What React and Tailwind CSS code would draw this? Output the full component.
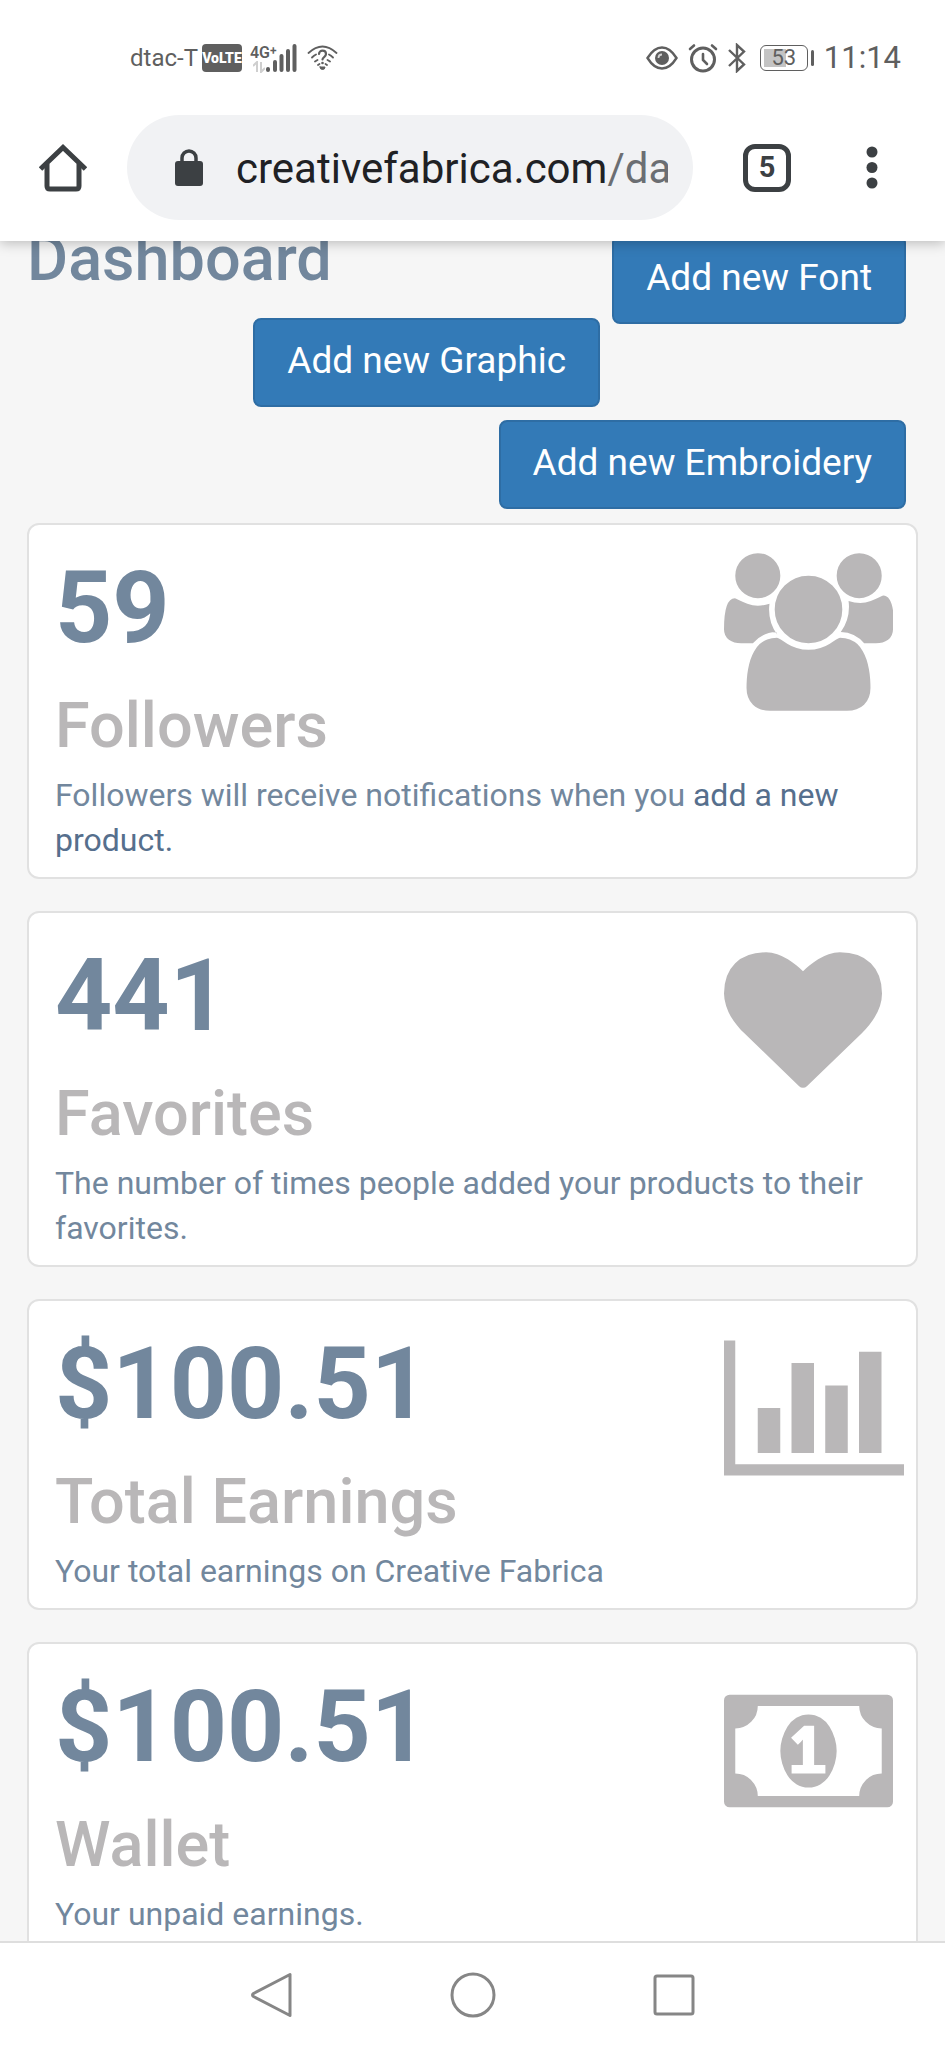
const STATS = [
  {
    value: '59',
    label: 'Followers',
    text: 'Followers will receive notifications when you ',
    link: 'add a new product.',
    icon: UsersIcon,
  },
  {
    value: '441',
    label: 'Favorites',
    text: 'The number of times people added your products to their favorites.',
    icon: HeartIcon,
  },
  {
    value: '$100.51',
    label: 'Total Earnings',
    text: 'Your total earnings on Creative Fabrica',
    icon: BarChartIcon,
  },
  {
    value: '$100.51',
    label: 'Wallet',
    text: 'Your unpaid earnings.',
    icon: MoneyIcon,
  },
]

function UsersIcon() {
  return (
    <svg className="h-[158px] w-[169px]" viewBox="0 0 1920 1792" fill="currentColor" aria-hidden>
      <path d="M593 896q-162 5-265 128h-134q-82 0-138-40.5t-56-118.5q0-353 124-353 6 0 43.5 21t97.5 42.5 119 21.5q67 0 133-23-5 37-5 66 0 159 93 287zm1071 637q0 120-73 189.5t-194 69.5h-874q-121 0-194-69.5t-73-189.5q0-53 3.5-103.5t14-109 26.5-108.5 43-97.5 62-81 85.5-53.5 111.5-20q10 0 43 21.5t73 48 107 48 135 21.5 135-21.5 107-48 73-48 43-21.5q61 0 111.5 20t85.5 53.5 62 81 43 97.5 26.5 108.5 14 109 3.5 103.5zm-1024-1277q0 106-75 181t-181 75-181-75-75-181 75-181 181-75 181 75 75 181zm704 384q0 159-112.5 271.5t-271.5 112.5-271.5-112.5-112.5-271.5 112.5-271.5 271.5-112.5 271.5 112.5 112.5 271.5zm576 225q0 78-56 118.5t-138 40.5h-134q-103-123-265-128 93-128 93-287 0-29-5-66 66 23 133 23 59 0 119-21.5t97.5-42.5 43.5-21q124 0 124 353zm-128-609q0 106-75 181t-181 75-181-75-75-181 75-181 181-75 181 75 75 181z" />
    </svg>
  )
}

function HeartIcon() {
  return (
    <svg className="h-[158px] w-[158px]" viewBox="0 0 1792 1792" fill="currentColor" aria-hidden>
      <path d="M896 1664q-26 0-44-18l-624-602q-10-8-27.5-26t-55.5-65.5-68-97.5-53.5-121-23.5-138q0-220 127-344t351-124q62 0 126.5 21.5t120 58 95.5 68.5 76 68q36-36 76-68t95.5-68.5 120-58 126.5-21.5q224 0 351 124t127 344q0 221-229 450l-623 600q-18 18-44 18z" />
    </svg>
  )
}

function BarChartIcon() {
  return (
    <svg className="h-[158px] w-[180px]" viewBox="0 0 2048 1792" fill="currentColor" aria-hidden>
      <path d="M640 896v512h-256v-512h256zm384-512v1024h-256v-1024h256zm1024 1152v128h-2048v-1536h128v1408h1920zm-640-896v768h-256v-768h256zm384-384v1152h-256v-1152h256z" />
    </svg>
  )
}

function MoneyIcon() {
  return (
    <svg className="h-[158px] w-[169px]" viewBox="0 0 1920 1792" fill="currentColor" aria-hidden>
      <path d="M768 1152h384v-96h-128v-448h-114l-148 137 77 80q42-37 55-57h2v288h-128v96zm512-256q0 70-21 142t-59.5 134-101.5 101-138 39-138-39-101.5-101-59.5-134-21-142 21-142 59.5-134 101.5-101 138-39 138 39 101.5 101 59.5 134 21 142zm512 256v-512q-106 0-181-75t-75-181h-1152q0 106-75 181t-181 75v512q106 0 181 75t75 181h1152q0-106 75-181t181-75zm128-832v1152q0 26-19 45t-45 19h-1792q-26 0-45-19t-19-45v-1152q0-26 19-45t45-19h1792q26 0 45 19t19 45z" />
    </svg>
  )
}

function StatusBar() {
  return (
    <div className="flex h-[115px] items-center justify-between pr-11 pl-[130px] text-[#5f5f5f]">
      <div className="flex items-center">
        <span className="text-2xl leading-7">dtac-T</span>
        <span className="ml-1 flex h-7 w-10 items-center justify-center rounded bg-[#5f5f5f] text-sm font-black text-white">
          VoLTE
        </span>
        <div className="ml-2 flex items-end">
          <div className="flex flex-col items-end">
            <span className="flex items-start text-base leading-4 font-semibold">
              4G<span className="text-xs leading-3">+</span>
            </span>
            {/* Data transfer arrows */}
            <svg className="mr-3 h-3 w-3" viewBox="0 0 12 12" fill="none" stroke="#cfcfcf" strokeWidth="2" aria-hidden>
              <path d="M0 5l4-4v10M8 1v10l4-4" />
            </svg>
          </div>
          <svg className="-ml-3 h-[30px] w-8" viewBox="0 0 32 30" stroke="currentColor" strokeWidth="4" strokeLinecap="round" aria-hidden>
            <path d="M3 27v-1M10 27v-8M16.500 27v-14M23 27V8M29.500 27V3" />
          </svg>
        </div>
        <svg className="ml-2.5 h-7 w-[31px]" viewBox="0 0 31 28" fill="none" stroke="currentColor" strokeWidth="1.800" strokeLinecap="round" aria-hidden>
          <path d="M1.500 9Q15.500-4 29.500 9M5 13.500q2-2 4-3M26 13.500q-2-2-4-3M8 17.500l2.500-1.500M23 17.500l-2.500-1.500M11 21l1.500-1M20 21l-1.500-1" />
          <path d="M12 10c0-4.500 7-4.500 7 0 0 3-3.500 3-3.500 5.500" strokeWidth="2.200" />
          <circle cx="15.500" cy="19" r="1.300" fill="currentColor" stroke="none" />
          <path d="M13 23h5q0 2.500-2.500 2.500t-2.500-2.500z" fill="currentColor" strokeWidth="1" />
        </svg>
      </div>

      <div className="flex items-center">
        <svg className="h-7 w-8" viewBox="0 0 32 28" fill="none" stroke="currentColor" strokeWidth="2.400" aria-hidden>
          <path d="M1.500 14Q8 3.500 16 3.500T30.500 14Q24 24.500 16 24.500T1.500 14z" />
          <circle cx="16" cy="14" r="7" fill="currentColor" stroke="none" />
          <path d="M12.500 14q0-3.500 3.500-3.500" stroke="#d5d5d5" strokeWidth="1.800" />
        </svg>
        <svg className="ml-2.5 h-[30px] w-[30px]" viewBox="0 0 30 30" fill="none" stroke="currentColor" strokeWidth="3" strokeLinecap="round" aria-hidden>
          <circle cx="15" cy="16.500" r="11.500" />
          <path d="M15 11v6l4 4M2 6l4-3.500M28 6l-4-3.500" strokeWidth="2.600" />
        </svg>
        <svg className="ml-2.5 h-[30px] w-[18px]" viewBox="0 0 18 30" fill="none" stroke="currentColor" strokeWidth="2.400" aria-hidden>
          <path d="M1 7l15 14.500-7 6.500V2l7 6.500L1 23" />
        </svg>
        <div className="ml-3.5 flex items-center gap-[3px]">
          <div className="flex h-[26px] w-12 rounded-md border border-current p-[3px]">
            <div className="flex flex-1 items-center justify-center bg-linear-to-r from-[#c4c4c4] from-55% to-white to-55% text-[22px] leading-none">
              53
            </div>
          </div>
          <div className="h-4 w-[3px] rounded-sm bg-[#5f5f5f]" />
        </div>
        <span className="ml-2.5 text-[31px] leading-9">11:14</span>
      </div>
    </div>
  )
}

function BrowserBar() {
  return (
    <div className="flex items-center pr-[67px] pb-[21px] pl-[39px] text-[#3c4043]">
      <button type="button" aria-label="Home" className="shrink-0">
        <svg className="h-12 w-12" viewBox="0 0 48 48" fill="none" stroke="currentColor" strokeWidth="5" strokeLinejoin="round" aria-hidden>
          <path d="M1.500 25L24 3.500 46.500 25" strokeLinejoin="miter" />
          <path d="M8 20v22q0 3 3 3h26q3 0 3-3V20" />
        </svg>
      </button>
      <button
        type="button"
        aria-label="Address bar"
        className="ml-10 flex h-[105px] min-w-0 flex-1 items-center rounded-full bg-[#f1f2f4] pr-[25px] pl-12 text-left"
      >
        <svg className="h-[37px] w-7 shrink-0" viewBox="0 0 28 37" aria-hidden>
          <path d="M7 13V9a7 7 0 0 1 14 0v4" fill="none" stroke="currentColor" strokeWidth="3.500" />
          <rect y="12" width="28" height="25" rx="3" fill="currentColor" />
        </svg>
        <span className="ml-[33px] min-w-0 flex-1 overflow-hidden pt-0.5 text-[42px] leading-[52px] whitespace-nowrap text-[#202124]">
          creativefabrica.com<span className="text-[#6b6e72]">/dashboard</span>
        </span>
      </button>
      <button
        type="button"
        aria-label="5 open tabs"
        className="ml-[50px] flex h-12 w-12 shrink-0 items-center justify-center rounded-xl border-[5px] border-current text-[29px] leading-none font-bold"
      >
        5
      </button>
      <button type="button" aria-label="Menu" className="ml-[75px] shrink-0">
        <svg className="h-[43px] w-3" viewBox="0 0 12 43" fill="currentColor" aria-hidden>
          <circle cx="6" cy="6" r="5.500" />
          <circle cx="6" cy="21.500" r="5.500" />
          <circle cx="6" cy="37" r="5.500" />
        </svg>
      </button>
    </div>
  )
}

function AddButton({ children }) {
  return (
    <button
      type="button"
      className="h-[89px] rounded-lg border-2 border-[#2e6da4] bg-[#337ab7] px-8 pb-1 text-[37px] whitespace-nowrap text-white"
    >
      {children}
    </button>
  )
}

function StatCard({ value, label, text, link, icon: Icon }) {
  return (
    <section className="rounded-xl border-2 border-[#e1e1e1] bg-white pt-7 pb-3.5 pl-[26px]">
      <div className="flex justify-between">
        <div>
          <p className="text-[100px] leading-[110px] font-bold text-[#72879d]">{value}</p>
          <h2 className="mt-7 text-[63px] leading-[70px] font-medium text-[#b9b7b8]">{label}</h2>
        </div>
        <div className="w-48 shrink-0 text-[#b9b7b8]">
          <Icon />
        </div>
      </div>
      <p className="mt-3 pr-[26px] text-[32px] leading-[45px] text-[#72879d]">
        {text}
        {link && (
          <a href="#add-product" className="text-[#566f8d]">
            {link}
          </a>
        )}
      </p>
    </section>
  )
}

function NavBar() {
  return (
    <nav className="flex h-[107px] shrink-0 items-center justify-center gap-[153px] border-t-2 border-[#dedede] bg-white pb-0.5 text-[#868686]">
      <button type="button" aria-label="Back">
        <svg className="h-12 w-12" viewBox="0 0 48 48" fill="none" stroke="currentColor" strokeWidth="3" strokeLinejoin="round" aria-hidden>
          <path d="M42 3.500v41L5.500 25.500q-2-1.500 0-3z" />
        </svg>
      </button>
      <button type="button" aria-label="Home screen">
        <svg className="h-12 w-12" viewBox="0 0 48 48" fill="none" stroke="currentColor" strokeWidth="3" aria-hidden>
          <circle cx="24" cy="24" r="21" />
        </svg>
      </button>
      <button type="button" aria-label="Recent apps">
        <svg className="h-12 w-12" viewBox="0 0 48 48" fill="none" stroke="currentColor" strokeWidth="3" aria-hidden>
          <rect x="5" y="5" width="38" height="38" rx="2" />
        </svg>
      </button>
    </nav>
  )
}

export default function App() {
  return (
    <div className="flex h-screen flex-col bg-[#f6f6f6] font-[Roboto,sans-serif]">
      <header className="relative z-10 shrink-0 bg-white shadow-[0_2px_12px_rgba(0,0,0,0.25)]">
        <StatusBar />
        <BrowserBar />
      </header>

      <main className="min-h-0 flex-1 overflow-hidden px-[27px]">
        <div className="-mt-1.5 flex flex-col pr-3">
          <div className="flex items-start justify-between">
            <h1 className="text-[63px] leading-12 font-medium text-[#72879d]">Dashboard</h1>
            <AddButton>Add new Font</AddButton>
          </div>
          <div className="-mt-1.5 flex justify-end pr-[306px]">
            <AddButton>Add new Graphic</AddButton>
          </div>
          <div className="mt-[13px] flex justify-end">
            <AddButton>Add new Embroidery</AddButton>
          </div>
        </div>

        <div className="mt-3.5 flex flex-col gap-8">
          {STATS.map((stat) => (
            <StatCard key={stat.label} {...stat} />
          ))}
        </div>
      </main>

      <NavBar />
    </div>
  )
}
